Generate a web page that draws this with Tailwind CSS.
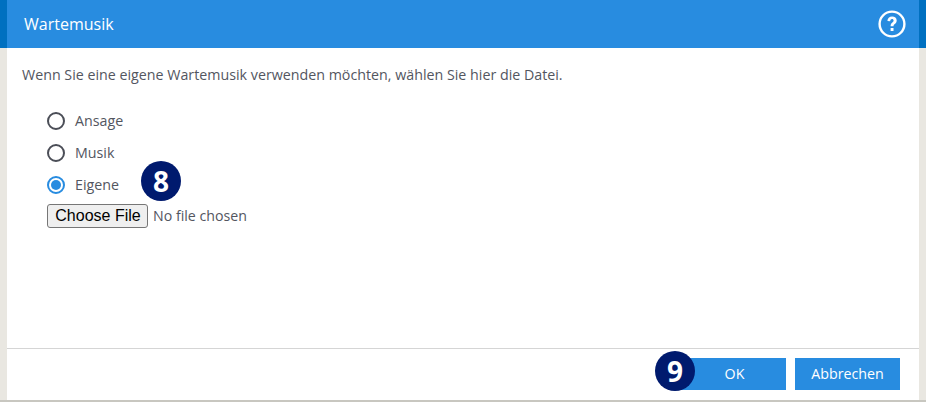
<!DOCTYPE html>
<html lang="de">
<head>
    <meta charset="UTF-8">
    <title>Wartemusik</title>
    <script src="https://cdn.jsdelivr.net/npm/@tailwindcss/browser@4"></script>
</head>
<body class="w-[926px] h-[402px] overflow-hidden bg-[#e9e7e1] font-['Open_Sans',sans-serif] text-[#53565f]">
    <div class="h-[48px] bg-[#0070c0] px-[7px]">
        <div class="h-full bg-[#288ce0] flex items-center justify-between pl-[17px] pr-[13px] text-white">
            <h1 class="text-[16px]">Wartemusik</h1>
            <svg class="w-[28px] h-[28px]" viewBox="0 0 28 28" fill="none">
                <circle cx="14" cy="14" r="12.4" stroke="white" stroke-width="2.4"/>
                <path d="M9.4 11c0-2.9 2-4.6 4.7-4.6s4.6 1.6 4.6 4c0 3.3-3.2 3.3-3.2 5.9h-2.9c0-3.7 3-3.8 3-5.7 0-.9-.6-1.5-1.6-1.5s-1.7.7-1.8 2.1z" fill="white"/>
                <rect x="12.6" y="18" width="2.9" height="3" fill="white"/>
            </svg>
        </div>
    </div>
    <div class="mx-[7px] h-[352px] bg-white flex flex-col">
        <div class="flex-1 pl-[15px] pt-[17px]">
            <p class="text-[14.25px] leading-[20px]">Wenn Sie eine eigene Wartemusik verwenden möchten, wählen Sie hier die Datei.</p>
            <div class="mt-[20px] pl-[25px] flex flex-col">
                <label class="h-[32px] flex items-center gap-[10px] text-[14.25px]">
                    <span class="w-[18px] h-[18px] rounded-full border-2 border-[#4b4e57] bg-white"></span>Ansage
                </label>
                <label class="h-[32px] flex items-center gap-[10px] text-[14.25px]">
                    <span class="w-[18px] h-[18px] rounded-full border-2 border-[#4b4e57] bg-white"></span>Musik
                </label>
                <label class="h-[32px] flex items-center gap-[10px] text-[14.25px]">
                    <span class="w-[18px] h-[18px] rounded-full border-2 border-[#288ce0] bg-white flex items-center justify-center">
                        <span class="w-[10px] h-[10px] rounded-full bg-[#288ce0]"></span>
                    </span>
                    <span>Eigene</span>
                    <span class="w-[40px] h-[40px] ml-[12px] -mt-[8px] rounded-full bg-[#001a6e] text-white flex items-center justify-center font-bold text-[28px]">8</span>
                </label>
                <div class="flex items-center h-[24px] mt-[3px] gap-[5px]">
                    <button class="w-[101px] h-[24px] pl-[1px] bg-[#efefef] border border-[#767676] rounded-[3px] text-black text-[16px] font-['Liberation_Sans'] leading-none">Choose File</button>
                    <span class="text-[14.2px]">No file chosen</span>
                </div>
            </div>
        </div>
        <div class="h-[52px] border-t border-[#d5d5d5] shrink-0 flex items-center justify-end pr-[19px] pb-[2px] gap-[9px] text-white text-[14.25px]">
            <div class="relative">
                <span class="absolute -left-[25px] -top-[7px] w-[40px] h-[40px] rounded-full bg-[#001a6e] flex items-center justify-center font-bold text-[28px]">9</span>
                <button class="w-[106px] h-[32px] pl-[3px] bg-[#288ce0]">OK</button>
            </div>
            <button class="w-[105px] h-[32px] bg-[#288ce0]">Abbrechen</button>
        </div>
    </div>
    <div class="h-[2px] bg-[#c8c7c0]"></div>
</body>
</html>
